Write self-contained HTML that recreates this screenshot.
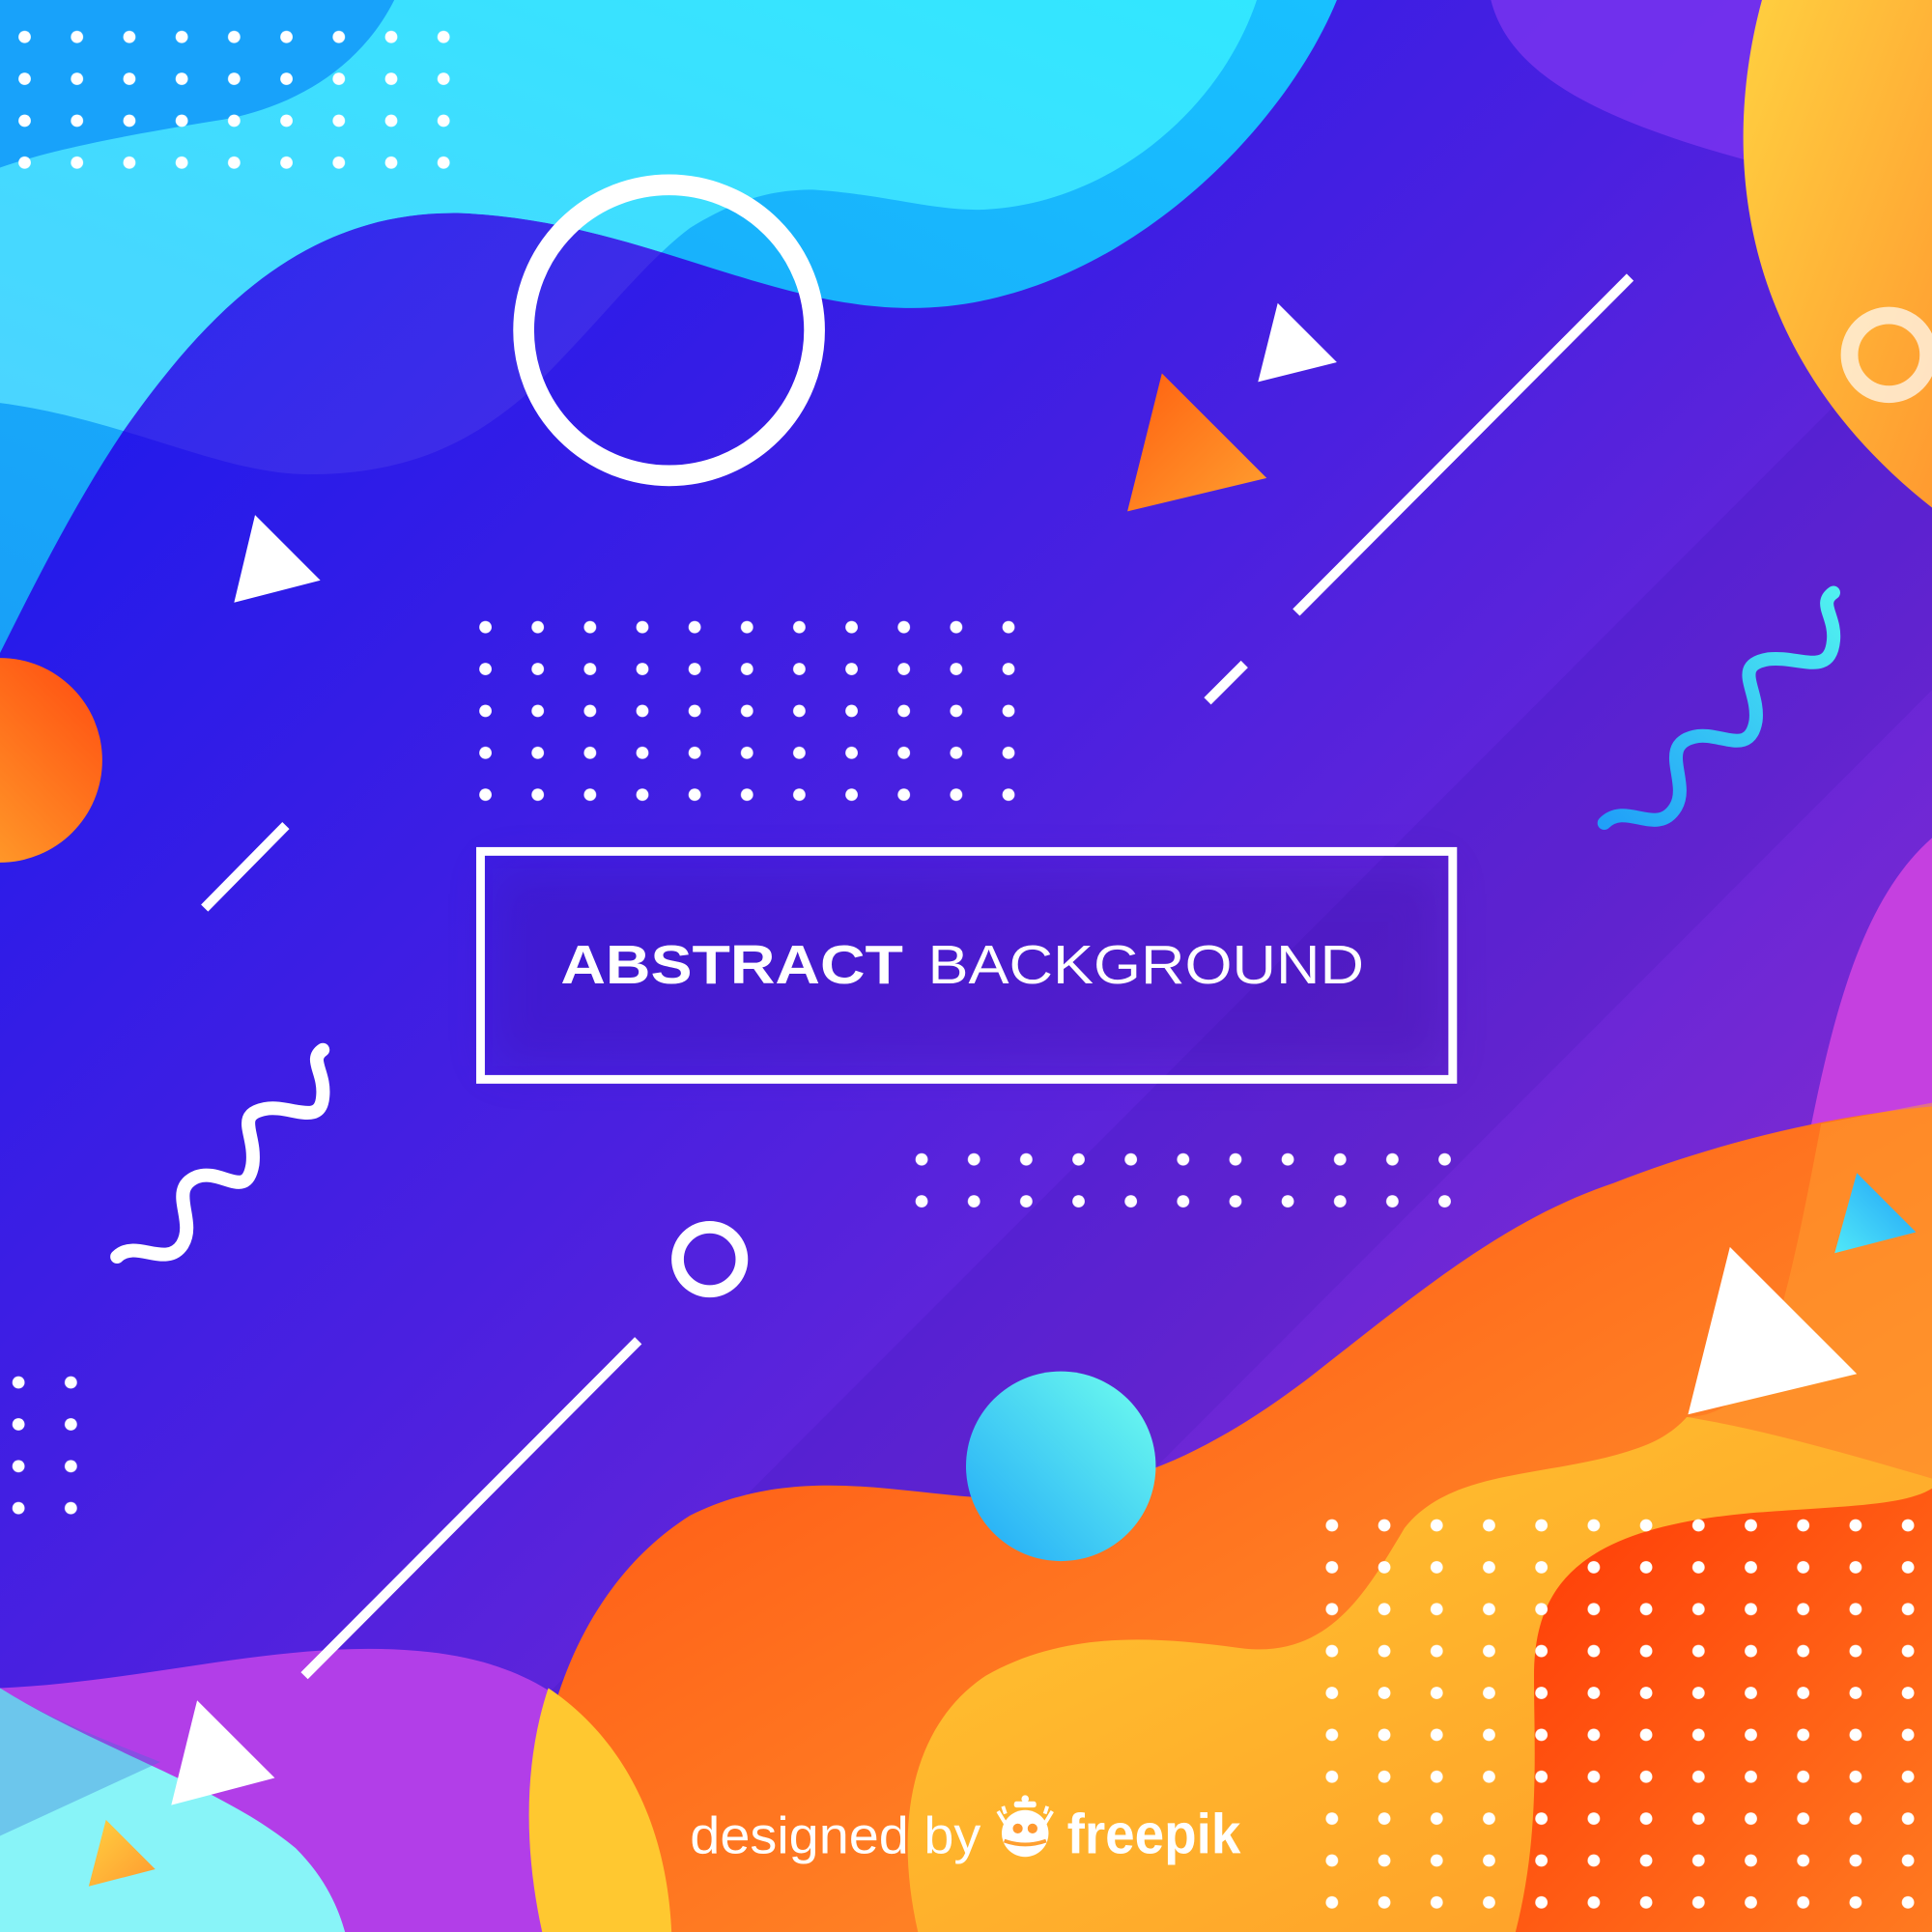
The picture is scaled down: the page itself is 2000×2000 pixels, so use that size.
<!DOCTYPE html>
<html><head><meta charset="utf-8"><style>html,body{margin:0;padding:0;overflow:hidden;width:2000px;height:2000px}svg{display:block}</style></head><body>
<svg width="2000" height="2000" viewBox="0 0 1568 1568" xmlns="http://www.w3.org/2000/svg">
<defs>
<linearGradient id="bg" x1="0" y1="0" x2="1" y2="1"><stop offset="0" stop-color="#1218f0"/><stop offset="0.45" stop-color="#4a20e0"/><stop offset="1" stop-color="#9a30c8"/></linearGradient>
<linearGradient id="cy" x1="1" y1="0" x2="0" y2="1"><stop offset="0" stop-color="#18c0ff"/><stop offset="1" stop-color="#18a0f8"/></linearGradient>
<linearGradient id="cyl" x1="1" y1="0" x2="0" y2="1"><stop offset="0" stop-color="#22e6ff"/><stop offset="1" stop-color="#40d0ff"/></linearGradient>
<linearGradient id="or" x1="0" y1="0" x2="1" y2="1"><stop offset="0" stop-color="#ff4a10"/><stop offset="1" stop-color="#ffa030"/></linearGradient>
<linearGradient id="ye" x1="0" y1="0" x2="1" y2="1"><stop offset="0" stop-color="#ffc830"/><stop offset="1" stop-color="#ff9a28"/></linearGradient>
<linearGradient id="tr" x1="0" y1="0" x2="1" y2="1"><stop offset="0" stop-color="#ffd040"/><stop offset="1" stop-color="#ff9a30"/></linearGradient>
<linearGradient id="lc" x1="1" y1="0" x2="0" y2="1"><stop offset="0" stop-color="#ff4a10"/><stop offset="1" stop-color="#ffb030"/></linearGradient>
<linearGradient id="ci" x1="1" y1="0" x2="0" y2="1"><stop offset="0" stop-color="#70ffee"/><stop offset="1" stop-color="#20a8f8"/></linearGradient>
<linearGradient id="otr" x1="0" y1="0" x2="1" y2="1"><stop offset="0" stop-color="#ff6010"/><stop offset="1" stop-color="#ffa030"/></linearGradient>
<linearGradient id="red" x1="0" y1="0" x2="1" y2="1"><stop offset="0" stop-color="#ff3a06"/><stop offset="1" stop-color="#ff7a20"/></linearGradient>
<linearGradient id="ctr" x1="1" y1="0" x2="0" y2="1"><stop offset="0" stop-color="#20a0f8"/><stop offset="1" stop-color="#50e8f8"/></linearGradient>
<linearGradient id="sq" x1="0" y1="1" x2="1" y2="0"><stop offset="0" stop-color="#20a0f8"/><stop offset="1" stop-color="#50f0f0"/></linearGradient>
<filter id="sh" x="-20%" y="-40%" width="140%" height="180%"><feGaussianBlur stdDeviation="18"/></filter>
<clipPath id="cyc"><path d="M0,0 L1085,0 C1040,110 900,250 740,250 C620,250 520,180 375,173 C250,170 170,250 100,350 C60,410 30,470 0,530 Z"/></clipPath>
<pattern id="p1" x="14.5" y="24.5" width="42.5" height="34" patternUnits="userSpaceOnUse"><circle cx="5.5" cy="5.5" r="5" fill="#fff"/></pattern>
<pattern id="p2" x="388.5" y="503.5" width="42.45" height="34" patternUnits="userSpaceOnUse"><circle cx="5.5" cy="5.5" r="5" fill="#fff"/></pattern>
<pattern id="p3" x="742.5" y="935.5" width="42.45" height="34" patternUnits="userSpaceOnUse"><circle cx="5.5" cy="5.5" r="5" fill="#fff"/></pattern>
<pattern id="p4" x="9.5" y="1116.5" width="42.5" height="34" patternUnits="userSpaceOnUse"><circle cx="5.5" cy="5.5" r="5" fill="#fff"/></pattern>
<pattern id="p5" x="1075.5" y="1232.5" width="42.5" height="34" patternUnits="userSpaceOnUse"><circle cx="5.5" cy="5.5" r="5" fill="#fff"/></pattern>
</defs>
<rect width="1568" height="1568" fill="url(#bg)"/>
<path d="M1568,250 L1568,560 L0,2130 L0,1820 Z" fill="#2a10a0" opacity="0.12"/>
<path d="M1210,0 C1230,80 1350,120 1568,165 L1568,0 Z" fill="#7a35f0" opacity="0.8"/>
<path d="M1430,0 C1400,110 1400,280 1568,412 L1568,0 Z" fill="url(#tr)"/>
<circle cx="1533" cy="288" r="32" fill="none" stroke="#fff" stroke-width="14" opacity="0.7"/>
<!-- top cyan -->
<path d="M0,0 L1085,0 C1040,110 900,250 740,250 C620,250 520,180 375,173 C250,170 170,250 100,350 C60,410 30,470 0,530 Z" fill="url(#cy)"/>
<g clip-path="url(#cyc)">
<path d="M0,327 C100,340 180,385 250,385 C330,385 380,360 425,322 C480,270 520,215 560,185 C600,160 630,154 660,154 C720,158 760,172 800,170 C900,165 990,90 1020,0 L0,0 Z" fill="url(#cyl)"/>
</g>
<path d="M0,327 C100,340 180,385 250,385 C330,385 380,360 425,322 C480,270 520,215 560,185 C600,160 630,154 660,154 C720,158 760,172 800,170 C900,165 990,90 1020,0 L0,0 Z" fill="#fff" opacity="0.07"/>
<path d="M0,0 L320,0 C290,60 230,90 175,98 C100,110 40,122 0,136 Z" fill="#18a2fa"/>
<circle cx="0" cy="617" r="83" fill="url(#lc)"/>
<!-- magenta right -->
<path d="M1568,680 C1500,740 1480,860 1455,990 C1430,1110 1400,1150 1370,1160 L1568,1230 Z" fill="#c540e0"/>
<!-- orange big -->
<path d="M440,1568 C420,1450 450,1300 560,1230 C640,1190 720,1210 790,1215 C900,1220 980,1180 1060,1120 C1150,1050 1220,990 1310,960 C1400,925 1490,905 1568,898 L1568,1568 Z" fill="url(#or)"/>
<path d="M1568,895 L1478,912 C1465,980 1450,1060 1430,1110 C1410,1140 1390,1150 1369,1150 L1568,1210 Z" fill="#ffa030" opacity="0.5"/>
<!-- yellow blob -->
<path d="M745,1568 C725,1480 740,1400 800,1360 C870,1320 950,1330 1010,1338 C1080,1345 1110,1290 1140,1240 C1180,1190 1260,1200 1330,1175 C1350,1168 1362,1158 1369,1150 C1430,1160 1500,1180 1568,1200 L1568,1568 Z" fill="url(#ye)"/>
<path d="M1230,1568 C1250,1490 1245,1420 1245,1360 C1245,1280 1290,1240 1420,1228 C1500,1222 1545,1222 1568,1208 L1568,1568 Z" fill="url(#red)"/>
<!-- bottom left -->
<path d="M0,1370 C120,1365 230,1330 340,1340 C460,1350 530,1420 545,1568 L0,1568 Z" fill="#b23ee8"/>
<path d="M445,1370 C490,1400 540,1460 545,1568 L440,1568 C425,1500 425,1430 445,1370Z" fill="#ffc830"/>
<path d="M0,1370 C80,1420 180,1450 240,1500 C265,1525 275,1550 280,1568 L0,1568 Z" fill="#88f4f8"/>
<path d="M0,1370 L0,1490 L130,1430 C80,1410 40,1395 0,1370Z" fill="#3a70d8" opacity="0.35"/>
<circle cx="861" cy="1190" r="77" fill="url(#ci)"/>
<circle cx="543" cy="268" r="118" fill="none" stroke="#fff" stroke-width="17"/>
<circle cx="576" cy="1022" r="26" fill="none" stroke="#fff" stroke-width="10"/>
<g fill="#fff">
<polygon points="207,418 260,471 190,489"/>
<polygon points="1037,246 1085,294 1021,310"/>
<polygon points="1404,1012 1507,1115 1370,1148"/>
<polygon points="160,1380 223,1443 139,1465"/>
</g>
<polygon points="943,303 1028,388 915,415" fill="url(#otr)"/>
<polygon points="86,1477 126,1517 72,1531" fill="url(#tr)"/>
<polygon points="1507,952 1555,1000 1489,1017" fill="url(#ctr)"/>
<g stroke="#fff" stroke-width="8">
<line x1="1052" y1="497" x2="1323" y2="225"/>
<line x1="980" y1="569" x2="1010" y2="539"/>
<line x1="166" y1="737" x2="232" y2="670"/>
<line x1="247" y1="1360" x2="518" y2="1088"/>
</g>
<rect x="14.5" y="24.5" width="382.5" height="136" fill="url(#p1)"/>
<rect x="388.5" y="503.5" width="467" height="170" fill="url(#p2)"/>
<rect x="742.5" y="935.5" width="467" height="68" fill="url(#p3)"/>
<rect x="9.5" y="1116.5" width="85" height="136" fill="url(#p4)"/>
<rect x="1075.5" y="1232.5" width="492.5" height="335.5" fill="url(#p5)"/>
<path d="M95,1020 C110,1005 135,1030 148,1010 C160,990 135,965 160,955 C180,948 200,975 205,945 C208,920 190,905 215,900 C235,896 260,915 262,890 C264,870 250,860 262,852" fill="none" stroke="#fff" stroke-width="11" stroke-linecap="round"/>
<path d="M1302,668 C1320,650 1345,680 1360,655 C1372,635 1345,605 1375,598 C1395,593 1420,615 1425,585 C1428,560 1405,540 1435,535 C1460,532 1485,550 1488,520 C1490,500 1475,490 1488,481" fill="none" stroke="url(#sq)" stroke-width="11" stroke-linecap="round"/>
<rect x="400" y="705" width="770" height="160" fill="#3a10a0" opacity="0.25" filter="url(#sh)"/>
<rect x="390" y="691" width="789" height="185" fill="none" stroke="#fff" stroke-width="7"/>
<text x="455" y="798" font-family="Liberation Sans, sans-serif" font-size="44" font-weight="700" fill="#fff" textLength="278" lengthAdjust="spacingAndGlyphs">ABSTRACT</text>
<text x="753" y="798" font-family="Liberation Sans, sans-serif" font-size="44" font-weight="300" fill="#fff" textLength="354" lengthAdjust="spacingAndGlyphs">BACKGROUND</text>
<text x="560" y="1504" font-family="Liberation Sans, sans-serif" font-size="42" fill="#fff" textLength="236" lengthAdjust="spacingAndGlyphs">designed by</text>
<g fill="#fff">
<circle cx="832" cy="1488" r="19"/>
<rect x="823" y="1462" width="18" height="5" rx="2"/>
<circle cx="832" cy="1460" r="3"/>
<path d="M810,1470 l6,10 M814,1466 l2,6 M854,1470 l-6,10 M850,1466 l-2,6" stroke="#fff" stroke-width="3"/>
</g>
<circle cx="826" cy="1484" r="4" fill="#ff9a30"/><circle cx="838" cy="1484" r="4" fill="#ff9a30"/>
<path d="M815,1494 Q832,1500 849,1494" stroke="#ffa030" stroke-width="3" fill="none"/>
<text x="866" y="1504" font-family="Liberation Sans, sans-serif" font-size="46" font-weight="700" fill="#fff" textLength="141" lengthAdjust="spacingAndGlyphs">freepik</text>
</svg>
</body></html>
